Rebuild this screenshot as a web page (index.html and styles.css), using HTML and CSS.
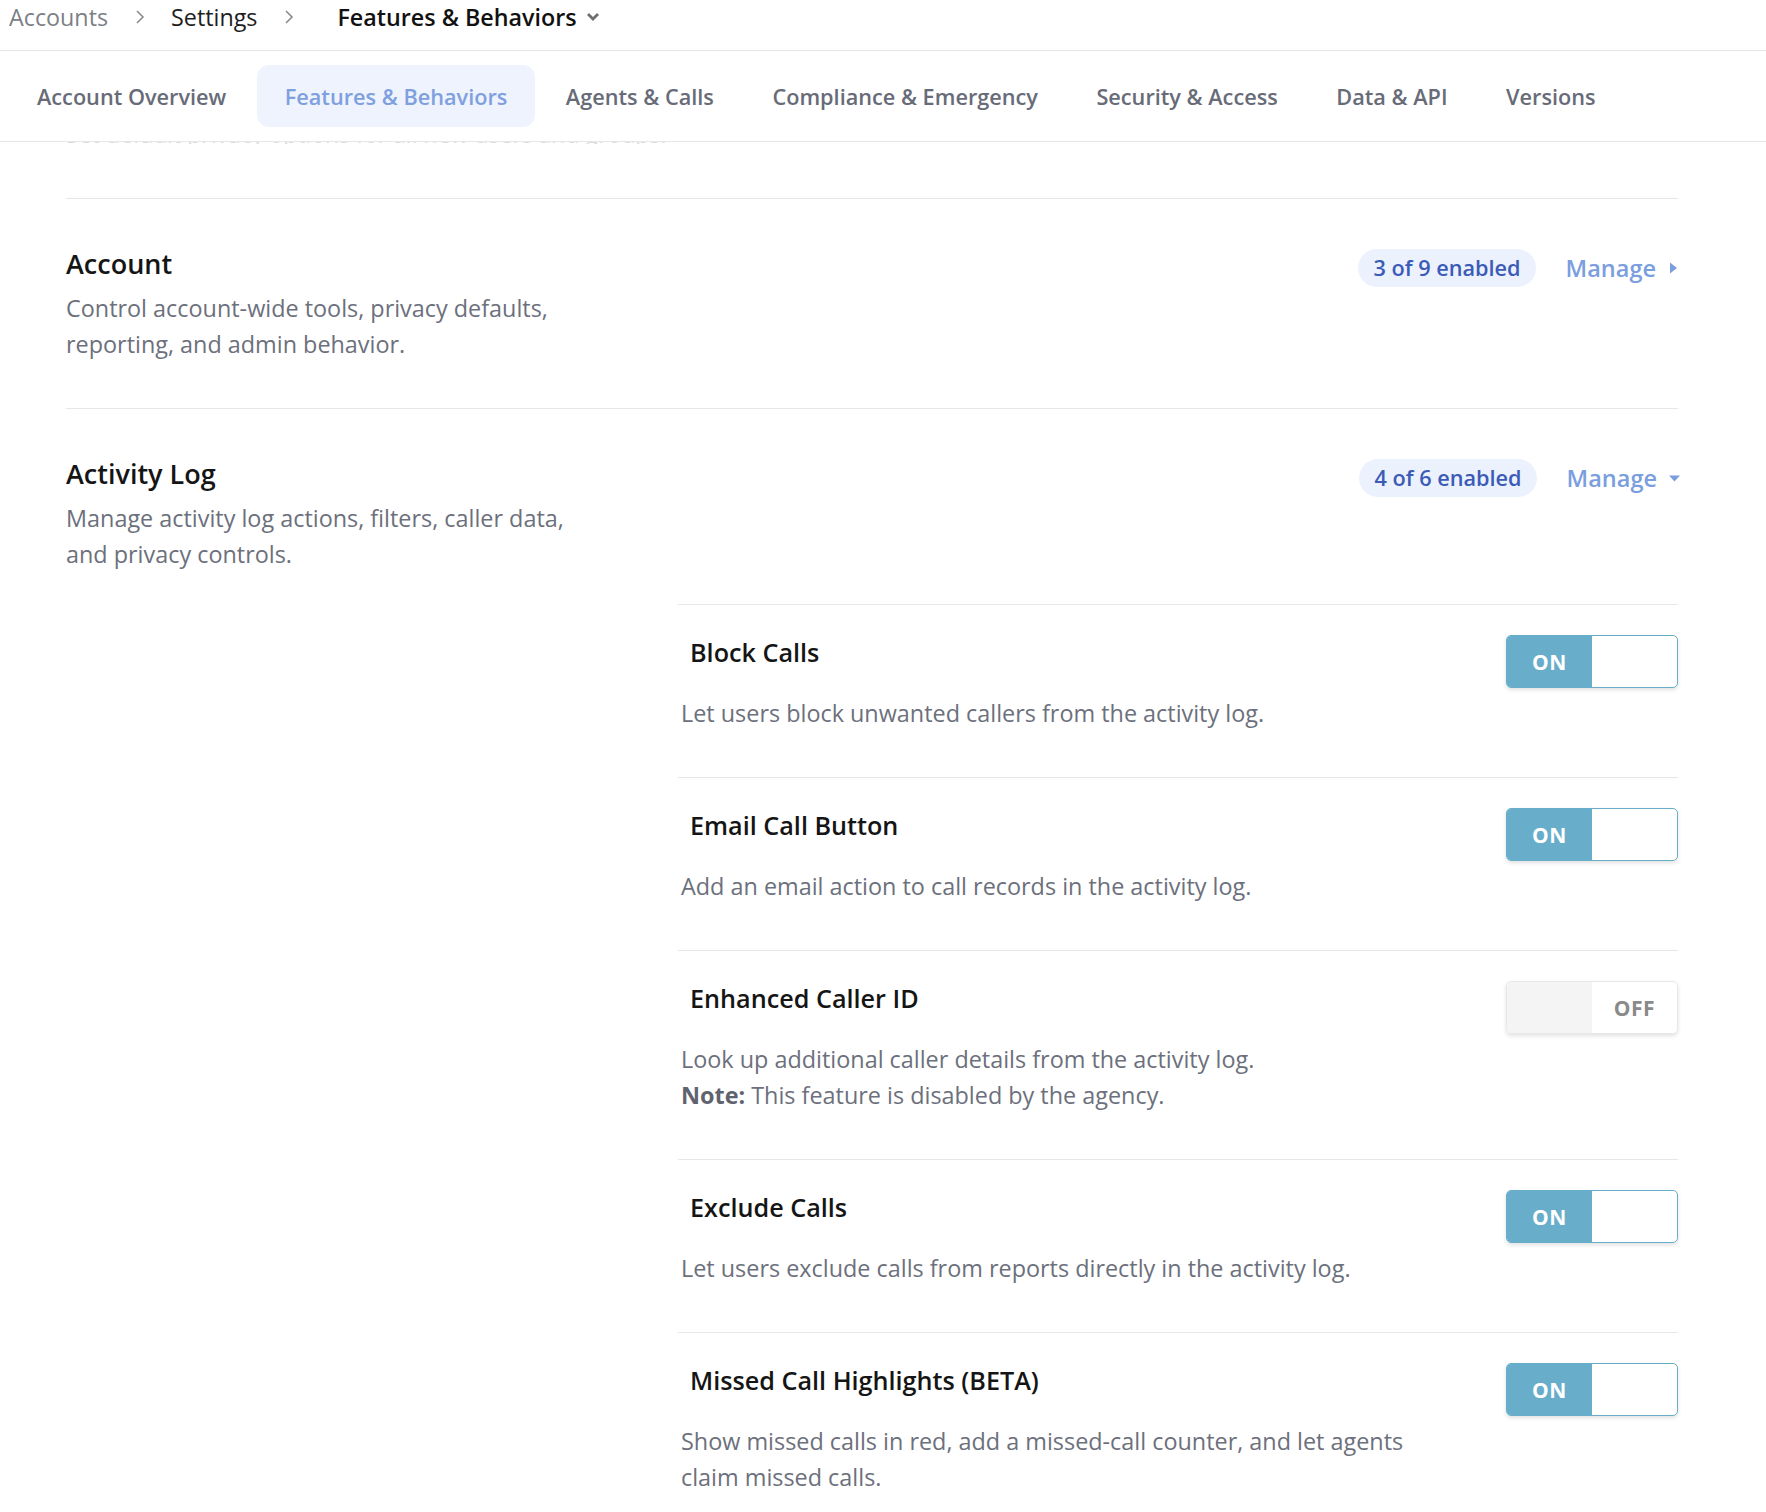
FILE: index.html
```html
<!DOCTYPE html>
<html lang="en">
<head>
  <meta charset="UTF-8" />
  <meta name="viewport" content="width=device-width, initial-scale=1.0"/>
  <title>Features &amp; Behaviors</title>
  <link rel="stylesheet" href="styles.css">
</head>
<body>

<div class="topbar">
  <nav class="crumbs">
    <span class="crumb muted">Accounts</span>
    <svg class="crumb-sep" width="10" height="16" viewBox="0 0 10 16"><polyline points="2,2 8,8 2,14" fill="none" stroke="#8c8c8c" stroke-width="1.6"/></svg>
    <span class="crumb">Settings</span>
    <svg class="crumb-sep" width="10" height="16" viewBox="0 0 10 16"><polyline points="2,2 8,8 2,14" fill="none" stroke="#8c8c8c" stroke-width="1.6"/></svg>
    <span class="crumb current">Features &amp; Behaviors</span>
    <svg class="crumb-drop" width="14" height="10" viewBox="0 0 14 10"><polyline points="2,2 7,7 12,2" fill="none" stroke="#6e6e6e" stroke-width="2.8"/></svg>
  </nav>

  <div class="tabs">
    <a class="tab">Account Overview</a>
    <a class="tab active">Features &amp; Behaviors</a>
    <a class="tab">Agents &amp; Calls</a>
    <a class="tab">Compliance &amp; Emergency</a>
    <a class="tab">Security &amp; Access</a>
    <a class="tab">Data &amp; API</a>
    <a class="tab">Versions</a>
  </div>
</div>

<div class="content">
  <!-- last line of the previous section, scrolled under the header: only its baseline shows -->
  <svg class="peek" width="600" height="2" viewBox="0 0 600 2"><text x="0" y="1">Set default privacy options for all new users and groups.</text></svg>

  <div class="section first">
    <div class="section-head">
      <div class="section-text">
        <h3>Account</h3>
        <p class="desc">Control account-wide tools, privacy defaults, reporting, and admin behavior.</p>
      </div>
      <div class="section-meta">
        <span class="badge">3 of 9 enabled</span>
        <a class="manage">Manage
          <svg class="caret-right" width="9" height="14" viewBox="0 0 9 14"><polygon points="1,1.5 8,7 1,12.5" fill="#7a9ede"/></svg>
        </a>
      </div>
    </div>
  </div>

  <div class="section">
    <div class="section-head">
      <div class="section-text">
        <h3>Activity Log</h3>
        <p class="desc">Manage activity log actions, filters, caller data, and privacy controls.</p>
      </div>
      <div class="section-meta">
        <span class="badge">4 of 6 enabled</span>
        <a class="manage">Manage
          <svg class="caret-down" width="13" height="9" viewBox="0 0 13 9"><polygon points="1,1.5 12,1.5 6.5,7.5" fill="#7a9ede"/></svg>
        </a>
      </div>
    </div>

    <div class="features">
      <div class="feature">
        <h4>Block Calls</h4>
        <div class="toggle on"><span class="half">ON</span><span class="half"></span></div>
        <p class="desc">Let users block unwanted callers from the activity log.</p>
      </div>
      <div class="feature">
        <h4>Email Call Button</h4>
        <div class="toggle on"><span class="half">ON</span><span class="half"></span></div>
        <p class="desc">Add an email action to call records in the activity log.</p>
      </div>
      <div class="feature">
        <h4>Enhanced Caller ID</h4>
        <div class="toggle off"><span class="half"></span><span class="half">OFF</span></div>
        <p class="desc">Look up additional caller details from the activity log.<br><b>Note:</b> This feature is disabled by the agency.</p>
      </div>
      <div class="feature">
        <h4>Exclude Calls</h4>
        <div class="toggle on"><span class="half">ON</span><span class="half"></span></div>
        <p class="desc">Let users exclude calls from reports directly in the activity log.</p>
      </div>
      <div class="feature">
        <h4>Missed Call Highlights (BETA)</h4>
        <div class="toggle on"><span class="half">ON</span><span class="half"></span></div>
        <p class="desc">Show missed calls in red, add a missed-call counter, and let agents claim missed calls.</p>
      </div>
    </div>
  </div>
</div>

</body>
</html>
```

FILE: styles.css
```css
body {
  font-family: 'Open Sans', 'Noto Sans', sans-serif;
  background: #ffffff;
  margin: 0;
  padding: 0;
  color: #151515;
}

/* header: breadcrumb + tab strip */
.crumbs {
  display: flex;
  align-items: center;
  height: 51px;
  padding: 0 0 0 9px;
  border-bottom: 1px solid #e6e7eb;
  box-sizing: border-box;
  font-size: 23.3px;
  line-height: 30px;
}

.crumbs .crumb {
  margin-top: -17px;
  color: #1e1e1e;
}

.crumbs .muted {
  color: #7c7f87;
}

.crumbs .current {
  font-weight: 600;
  color: #111111;
  margin-left: 17px;
}

.crumb-sep {
  margin: -17px 26px 0 27px;
}

.crumb-drop {
  margin: -17px 0 0 9px;
}

.tabs {
  display: flex;
  gap: 2.5px;
  padding: 14px 0 14px 9px;
  border-bottom: 1px solid #e6e7eb;
}

.tab {
  display: flex;
  align-items: center;
  height: 62px;
  padding: 0 28px;
  border-radius: 12px;
  font-size: 21.7px;
  font-weight: 600;
  color: #686b78;
}

.tab.active {
  background: #eef3fd;
  color: #7fa0e0;
}

/* content */
.content {
  padding: 0 88px 0 66px;
}

.peek {
  display: block;
  overflow: hidden;
}

.peek text {
  font-family: 'Open Sans', sans-serif;
  font-size: 23px;
  fill: #dcdcdc;
}

.section {
  border-top: 1px solid #e6e7eb;
}

.section.first {
  margin-top: 54px;
}

.section-head {
  display: flex;
  justify-content: space-between;
  align-items: flex-start;
  padding: 48px 0 46px 0;
}

.section-text h3 {
  margin: 0;
  font-size: 27px;
  line-height: 34px;
  font-weight: 600;
}

.desc {
  margin: 9px 0 0 0;
  font-size: 23.4px;
  line-height: 36px;
  color: #6c707c;
  max-width: 520px;
}

.desc b {
  font-weight: 700;
  color: #5f636e;
}

.section-meta {
  display: flex;
  align-items: center;
  margin-top: 2px;
}

.badge {
  display: inline-block;
  height: 38px;
  line-height: 38px;
  padding: 0 15px;
  border-radius: 19px;
  background: #ebf1fd;
  color: #3b5bb7;
  font-size: 21.7px;
  font-weight: 600;
}

.manage {
  display: flex;
  align-items: center;
  margin-left: 30px;
  font-size: 23.5px;
  font-weight: 600;
  color: #7a9ede;
}

.caret-right {
  margin-left: 13px;
}

.caret-down {
  margin: 0 -3px 0 11px;
}

/* feature rows inside a section */
.features {
  margin: -14px 0 0 612px;
}

.feature {
  display: grid;
  grid-template-columns: 1fr auto;
  border-top: 1px solid #e6e7eb;
  padding: 30px 0 46px 0;
}

.feature h4 {
  grid-column: 1;
  grid-row: 1;
  margin: 2px 0 0 12px;
  font-size: 25.2px;
  line-height: 30px;
  font-weight: 600;
}

.feature .desc {
  grid-column: 1;
  grid-row: 2;
  margin: 28px 0 0 3px;
  max-width: 760px;
}

.toggle {
  grid-column: 2;
  grid-row: 1 / span 2;
  align-self: start;
  display: flex;
  width: 172px;
  height: 53px;
  box-sizing: border-box;
  border-radius: 5px;
  overflow: hidden;
  box-shadow: 0 2px 4px rgba(0, 0, 0, 0.12);
}

.toggle .half {
  width: 50%;
  display: flex;
  align-items: center;
  justify-content: center;
  font-size: 21px;
  font-weight: 700;
  letter-spacing: 0.5px;
}

.toggle.on {
  border: 1px solid #68adc9;
}

.toggle.on .half:first-child {
  background: #68adc9;
  color: #ffffff;
}

.toggle.off {
  border: 1px solid #e8e8e8;
}

.toggle.off .half:first-child {
  background: #f4f4f4;
}

.toggle.off .half:last-child {
  color: #8a8a8a;
}
```
